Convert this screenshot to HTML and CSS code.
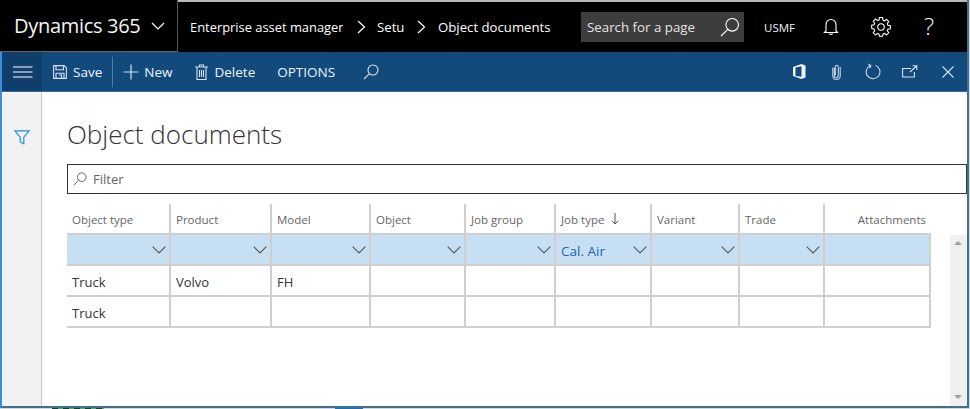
FILE: index.html
```html
<!DOCTYPE html>
<html lang="en">
<head>
<meta charset="utf-8">
<title>Object documents</title>
<link rel="stylesheet" href="styles.css">
</head>
<body>
<div class="window">
  <header class="topbar">
    <div class="brand">
      <span class="brand-name">Dynamics 365</span>
      <svg class="brand-chev" width="14" height="8" viewBox="0 0 14 8"><path d="M1 1l6 6 6-6" fill="none" stroke="#fff" stroke-width="1.2"/></svg>
    </div>
    <nav class="crumbs">
      <span class="crumb crumb-a">Enterprise asset management</span>
      <svg class="crumb-sep" width="9" height="14" viewBox="0 0 9 14"><path d="M1 1l6.5 6L1 13" fill="none" stroke="#fff" stroke-width="1.2"/></svg>
      <span class="crumb crumb-b">Setup</span>
      <svg class="crumb-sep" width="9" height="14" viewBox="0 0 9 14"><path d="M1 1l6.5 6L1 13" fill="none" stroke="#fff" stroke-width="1.2"/></svg>
      <span class="crumb">Object documents</span>
    </nav>
    <div class="page-search">
      <span>Search for a page</span>
      <svg width="20" height="20" viewBox="0 0 20 20"><circle cx="12.2" cy="7.8" r="6.3" fill="none" stroke="#fff" stroke-width="1.1"/><path d="M7.8 12.4L1 19" fill="none" stroke="#fff" stroke-width="1.1"/></svg>
    </div>
    <span class="company">USMF</span>
    <svg class="top-icon bell" width="16" height="18" viewBox="0 0 16 18"><path d="M3 13V6.5a5 5 0 0 1 10 0V13l1.5 1.5h-13z" fill="none" stroke="#fff" stroke-width="1.1"/><path d="M6.5 15.5a1.6 1.6 0 0 0 3 0" fill="none" stroke="#fff" stroke-width="1.1"/></svg>
    <svg class="top-icon gear" width="20" height="20" viewBox="0 0 20 20"><path d="M8.4 1h3.2l.4 2.6 1.5.7 2.2-1.5 2.2 2.3-1.5 2.1.6 1.6 2.5.4v3.2l-2.5.4-.6 1.5 1.500 2.200-2.200 2.200-2.200-1.500-1.500.6-.4 2.200H8.4L8 17.800l-1.500-.6-2.200 1.500-2.200-2.200 1.500-2.200-.6-1.500L.5 12V8.800L3 8.400l.6-1.600-1.500-2.100 2.200-2.300 2.200 1.500L8 3.600z" transform="translate(.2 -.4) scale(.98)" fill="none" stroke="#fff" stroke-width="1.1"/><circle cx="10" cy="10" r="3.2" fill="none" stroke="#fff" stroke-width="1.1"/></svg>
    <span class="help">?</span>
  </header>
  <div class="commandbar">
    <button class="hamburger" type="button" aria-label="Menu">
      <svg width="20" height="12" viewBox="0 0 20 12"><path d="M0 1h19.500M0 6h19.500M0 11h19.500" stroke="#fff" stroke-width="1.200"/></svg>
    </button>
    <div class="cmd cmd-save">
      <svg width="14" height="14" viewBox="0 0 14 14"><path d="M.6.6h10.600l2.200 2.200v10.600H.6z M3 .8v4h7.500v-4 M3 13.200V8.300h8v4.900 M6 10h2.500v3" fill="none" stroke="#d5e2ef" stroke-width="1.100"/></svg>
      <span>Save</span>
    </div>
    <span class="cmd-divider"></span>
    <div class="cmd cmd-new">
      <svg width="16" height="16" viewBox="0 0 16 16"><path d="M8 .5v15M.5 8h15" stroke="#d5e2ef" stroke-width="1.200"/></svg>
      <span>New</span>
    </div>
    <div class="cmd cmd-delete">
      <svg width="13" height="16" viewBox="0 0 13 16"><path d="M0 3h13M4.500 3V1h4v2M2 3.500v12h9v-12M4.500 6v7M6.500 6v7M8.500 6v7" fill="none" stroke="#d5e2ef" stroke-width="1.100"/></svg>
      <span>Delete</span>
    </div>
    <div class="cmd cmd-options"><span>OPTIONS</span></div>
    <svg class="cmd-search" width="16" height="16" viewBox="0 0 16 16"><circle cx="10" cy="6" r="5" fill="none" stroke="#d5e2ef" stroke-width="1.100"/><path d="M6.500 9.700L1 15" fill="none" stroke="#d5e2ef" stroke-width="1.100"/></svg>
    <div class="cmd-right">
      <svg class="ri-office" width="13" height="15" viewBox="0 0 13 15"><path d="M8.500 0L0 3v9l8.500 3 4-1.500v-12zM8.500 2.300v10.400L3.500 12l-1 .3V3.500z" fill="#eef3f8" fill-rule="evenodd"/></svg>
      <svg class="ri-clip" width="9" height="16" viewBox="0 0 9 16"><path d="M2.500 4v8a2 2 0 0 0 4 0V3a1.500 1.500 0 0 0-3 0v8.500" transform="translate(-.2 -.2)" fill="none" stroke="#c3d3e3" stroke-width="1.100"/><path d="M.8 3.500v8.500a3.700 3.700 0 0 0 7.400 0V3" fill="none" stroke="#c3d3e3" stroke-width="1.100"/></svg>
      <svg class="ri-refresh" width="16" height="17" viewBox="0 0 17 17"><path d="M5.200 2.400A7.300 7.300 0 1 0 11 2" fill="none" stroke="#d5e2ef" stroke-width="1.100"/><path d="M3.500 .5l2.800 1.700-1.400 2.800" fill="none" stroke="#d5e2ef" stroke-width="1.100"/></svg>
      <svg class="ri-pop" width="16" height="13" viewBox="0 0 16 13"><path d="M9 3.500H.6v8.500h11.800V7" fill="none" stroke="#d5e2ef" stroke-width="1.100"/><path d="M8 7l6.500-6M10.500 .7h4.300V5" fill="none" stroke="#d5e2ef" stroke-width="1.100"/></svg>
      <svg class="ri-close" width="12" height="12" viewBox="0 0 12 12"><path d="M.5.5l11 11M11.500.5l-11 11" stroke="#d5e2ef" stroke-width="1.100"/></svg>
    </div>
  </div>
  <div class="workspace">
    <aside class="sidebar">
      <svg width="16" height="15" viewBox="0 0 16 15"><path d="M.8.8h14.400L9.800 7.200v6.600L6.200 12V7.200z" fill="none" stroke="#2a8ae0" stroke-width="1.200"/></svg>
    </aside>
    <main class="content">
      <h1 class="title">Object documents</h1>
      <div class="filter">
        <svg width="14" height="14" viewBox="0 0 14 14"><circle cx="8.800" cy="5.200" r="4.300" fill="none" stroke="#666" stroke-width="1"/><path d="M5.700 8.300L.8 13" fill="none" stroke="#666" stroke-width="1"/></svg>
        <span>Filter</span>
      </div>
      <div class="grid">
        <div class="head">Object type</div>
        <div class="head">Product</div>
        <div class="head">Model</div>
        <div class="head">Object</div>
        <div class="head">Job group</div>
        <div class="head">Job type <svg class="sort" width="8" height="12" viewBox="0 0 8 12"><path d="M4 0v11M.8 7.800L4 11l3.200-3.200" fill="none" stroke="#555" stroke-width="1"/></svg></div>
        <div class="head">Variant</div>
        <div class="head">Trade</div>
        <div class="head head-end">Attachments</div>

        <div class="sel"><svg class="chev" width="14" height="8" viewBox="0 0 14 8"><path d="M.7.7L7 7l6.300-6.300" fill="none" stroke="#555" stroke-width="1.100"/></svg></div>
        <div class="sel"><svg class="chev" width="14" height="8" viewBox="0 0 14 8"><path d="M.7.7L7 7l6.300-6.300" fill="none" stroke="#555" stroke-width="1.100"/></svg></div>
        <div class="sel"><svg class="chev" width="14" height="8" viewBox="0 0 14 8"><path d="M.7.7L7 7l6.300-6.300" fill="none" stroke="#555" stroke-width="1.100"/></svg></div>
        <div class="sel"><svg class="chev" width="14" height="8" viewBox="0 0 14 8"><path d="M.7.7L7 7l6.300-6.300" fill="none" stroke="#555" stroke-width="1.100"/></svg></div>
        <div class="sel"><svg class="chev" width="14" height="8" viewBox="0 0 14 8"><path d="M.7.7L7 7l6.300-6.300" fill="none" stroke="#555" stroke-width="1.100"/></svg></div>
        <div class="sel"><span class="sel-value">Cal. Air</span><svg class="chev" width="14" height="8" viewBox="0 0 14 8"><path d="M.7.7L7 7l6.300-6.300" fill="none" stroke="#555" stroke-width="1.100"/></svg></div>
        <div class="sel"><svg class="chev" width="14" height="8" viewBox="0 0 14 8"><path d="M.7.7L7 7l6.300-6.300" fill="none" stroke="#555" stroke-width="1.100"/></svg></div>
        <div class="sel"><svg class="chev" width="14" height="8" viewBox="0 0 14 8"><path d="M.7.7L7 7l6.300-6.300" fill="none" stroke="#555" stroke-width="1.100"/></svg></div>
        <div class="sel"></div>

        <div class="cell">Truck</div>
        <div class="cell">Volvo</div>
        <div class="cell">FH</div>
        <div class="cell"></div><div class="cell"></div><div class="cell"></div><div class="cell"></div><div class="cell"></div><div class="cell"></div>

        <div class="cell">Truck</div>
        <div class="cell"></div><div class="cell"></div><div class="cell"></div><div class="cell"></div><div class="cell"></div><div class="cell"></div><div class="cell"></div><div class="cell"></div>
      </div>
      <div class="scrollbar">
        <span class="arrow-up"></span>
        <span class="arrow-down"></span>
      </div>
    </main>
  </div>
</div>
<div class="under">
  <span class="under-a"></span>
  <span class="under-b"></span>
</div>
</body>
</html>
```

FILE: styles.css
```css
* { box-sizing: border-box; }
html, body { margin: 0; padding: 0; height: 409px; width: 970px; overflow: hidden; background: #d8d8d8; }
body { font-family: "Open Sans", "Noto Sans", sans-serif; font-size: 13px; color: #333; }

.window { width: 969px; height: 408px; display: flex; flex-direction: column; background: #fff; border-right: 2px solid #3f7196; }

.topbar { height: 52px; flex: none; background: #000; color: #fff; display: flex; align-items: center; border-top: 2px solid #b9b9b9; }
.brand { width: 178px; flex: none; margin-top: -2px; height: 52px; border-right: 1px solid #555; border-bottom: 1px solid #666; background: #000; display: flex; align-items: center; padding-left: 14px; }
.brand-name { font-size: 20px; letter-spacing: -.3px; color: #f4f4f4; width: 137px; white-space: nowrap; }
.crumbs { display: flex; align-items: center; width: 391px; flex: none; padding-left: 12px; }
.crumb { font-size: 13.200px; white-space: nowrap; overflow: hidden; color: #fff; }
.crumb-a { width: 153px; font-size: 12.900px; }
.crumb-b { width: 27px; }
.crumb-sep { flex: none; margin: 0 11px 0 14px; }
.crumb-sep + .crumb-b + .crumb-sep { margin: 0 12px 0 13px; }
.page-search { width: 163px; height: 30px; background: #3d3d3d; flex: none; margin-left: 12px; padding: 0 4px 0 6px; display: flex; align-items: center; justify-content: space-between; font-size: 13.300px; color: #e4e4e4; }
.company { font-size: 11.500px; color: #f0f0f0; margin-left: 20px; width: 38px; flex: none; }
.top-icon { flex: none; }
.bell { margin-left: 21px; }
.gear { margin-left: 32px; }
.help { font-size: 24px; font-weight: 300; line-height: 30px; margin-left: 33px; margin-top: -2px; color: #f0f0f0; }

.commandbar { height: 40px; flex: none; display: flex; align-items: center; background: #124a7c; color: #eef3f8; border-left: 2px solid #3a8fdc; border-bottom: 1px solid #2f6ea5; font-size: 13.500px; }
.hamburger { width: 40px; height: 39px; flex: none; background: #0e3e69; border: 0; padding: 0 0 0 2px; display: flex; align-items: center; justify-content: center; }
.cmd { display: flex; align-items: center; white-space: nowrap; }
.cmd-save { margin-left: 11px; gap: 6px; }
.cmd-divider { width: 1px; height: 30px; background: #4f7ea8; margin: 0 10px 0 10px; flex: none; }
.cmd-new { gap: 5px; }
.cmd-delete { margin-left: 23px; gap: 6px; }
.cmd-options { margin-left: 22px; }
.cmd-search { margin-left: 28px; flex: none; }
.cmd-right { margin-left: auto; display: flex; align-items: center; padding-right: 13px; }
.ri-clip { margin-left: 26px; }
.ri-refresh { margin-left: 24px; }
.ri-pop { margin-left: 21px; }
.ri-close { margin-left: 24px; }

.workspace { flex: 1; display: flex; min-height: 0; border-left: 2px solid #3a8fdc; border-bottom: 2px solid #3f7196; }
.sidebar { width: 40px; flex: none; background: #f2f2f2; border-right: 1px solid #c8c8c8; padding: 38px 0 0 12px; }
.sidebar svg { display: block; }
.content { flex: 1; position: relative; padding: 0 0 0 25px; min-width: 0; }

.title { margin: 23px 0 0; font-size: 26px; font-weight: 300; line-height: 38px; color: #333; }
.filter { margin-top: 11px; height: 30px; width: 900px; border: 1px solid #333; display: flex; align-items: center; gap: 6px; padding-left: 5px; color: #666; font-size: 13px; }

.grid { margin-top: 10px; width: 864px; display: grid; grid-template-columns: 104px 101px 99px 95px 90px 96px 88px 85px 106px; grid-template-rows: 31px 31px 31px 31px; }
.head, .sel, .cell { border-right: 2px solid #cfcfcf; display: flex; align-items: center; padding-left: 5px; white-space: nowrap; }
.head { font-size: 11.500px; color: #666; border-bottom: 2px solid #cfcfcf; height: 31px; padding-top: 1px; }
.head-end { justify-content: flex-end; padding-right: 5px; border-right: 0; }
.sort { margin-left: 7px; }
.sel { background: #c7dff2; border-bottom: 2px solid #cfcfcf; position: relative; padding-top: 2px; }
.sel-value { color: #1b67ac; font-size: 13.500px; }
.chev { position: absolute; right: 3px; top: 11px; }
.cell { border-bottom: 2px solid #cfcfcf; font-size: 13px; color: #333; padding-top: 2px; }

.scrollbar { position: absolute; right: 0; top: 143px; bottom: 0; width: 17px; background: #f0f0f0; }
.arrow-up, .arrow-down { position: absolute; left: 4px; width: 0; height: 0; border-left: 4px solid transparent; border-right: 4px solid transparent; }
.arrow-up { top: 6px; border-bottom: 4px solid #a0a0a0; }
.arrow-down { bottom: 7px; border-top: 4px solid #a0a0a0; }

.under { height: 1px; position: relative; }
.under-a { position: absolute; left: 52px; width: 52px; height: 1px; background: repeating-linear-gradient(90deg, #1f3a2a 0 6px, #5fa36e 6px 11px); }
.under-b { position: absolute; left: 335px; width: 28px; height: 1px; background: #1c6fb0; }
```
